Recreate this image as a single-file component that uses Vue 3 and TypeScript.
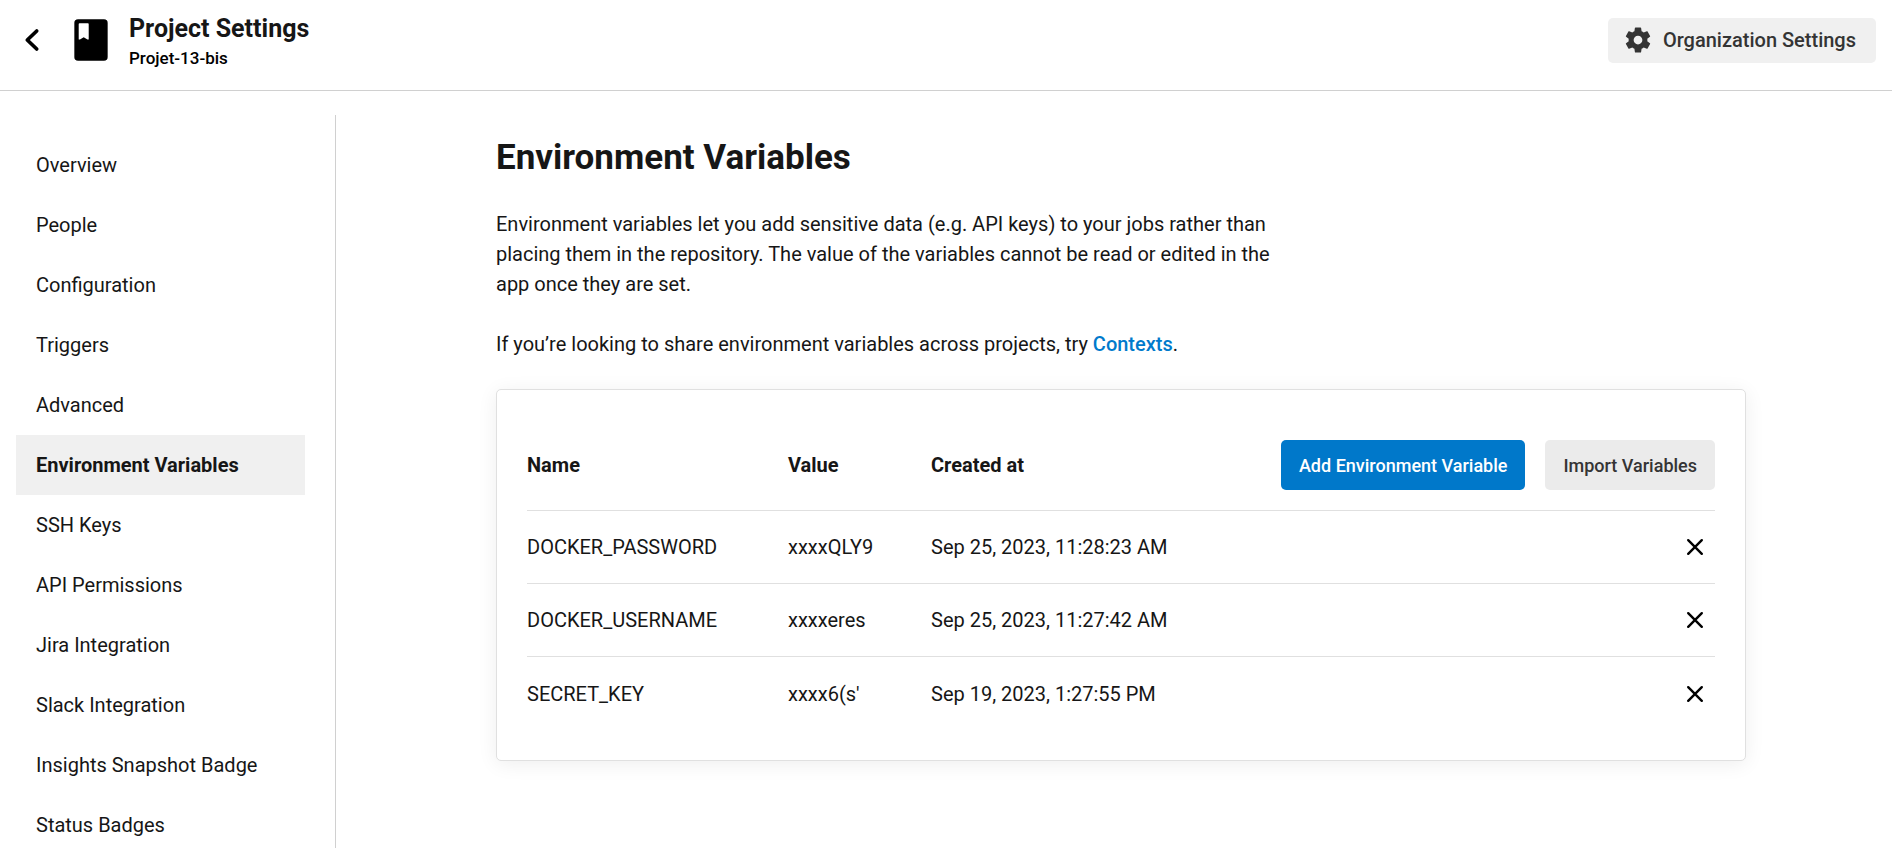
<script setup lang="ts">
interface NavItem {
  label: string
  active?: boolean
}

interface EnvVariable {
  name: string
  value: string
  createdAt: string
}

const navItems: NavItem[] = [
  { label: 'Overview' },
  { label: 'People' },
  { label: 'Configuration' },
  { label: 'Triggers' },
  { label: 'Advanced' },
  { label: 'Environment Variables', active: true },
  { label: 'SSH Keys' },
  { label: 'API Permissions' },
  { label: 'Jira Integration' },
  { label: 'Slack Integration' },
  { label: 'Insights Snapshot Badge' },
  { label: 'Status Badges' },
]

const variables: EnvVariable[] = [
  { name: 'DOCKER_PASSWORD', value: 'xxxxQLY9', createdAt: 'Sep 25, 2023, 11:28:23 AM' },
  { name: 'DOCKER_USERNAME', value: 'xxxxeres', createdAt: 'Sep 25, 2023, 11:27:42 AM' },
  { name: 'SECRET_KEY', value: "xxxx6(s'", createdAt: 'Sep 19, 2023, 1:27:55 PM' },
]
</script>

<template>
  <div class="page">
    <header class="topbar">
      <button class="back" type="button" aria-label="Back">
        <svg width="30" height="30" viewBox="0 0 30 30" fill="none" stroke="#000" stroke-width="3.700" stroke-linecap="round" stroke-linejoin="round">
          <path d="M20.700 6 11.300 15l9.400 9" />
        </svg>
      </button>
      <svg class="book" width="50" height="50" viewBox="0 0 24 24" aria-hidden="true">
        <rect x="4" y="2" width="16" height="20" rx="1.800" fill="#000" />
        <path fill="#fff" d="M6.700 3.900h3.700c.3 0 .5.200.5.500v7.400h-.6L8.500 10.700 6.700 11.800h-.6V4.400c0-.3.200-.5.600-.5z" />
      </svg>
      <div class="heading">
        <div class="title">Project Settings</div>
        <div class="subtitle">Projet-13-bis</div>
      </div>
      <button class="org" type="button">
        <svg width="30" height="30" viewBox="0 0 24 24" fill="#343434" aria-hidden="true">
          <path d="M19.430 12.980c.04-.32.07-.64.07-.98s-.03-.66-.07-.98l2.110-1.650c.19-.15.24-.42.12-.64l-2-3.460c-.12-.22-.39-.3-.61-.22l-2.490 1c-.52-.4-1.080-.73-1.690-.98l-.38-2.650C14.460 2.180 14.250 2 14 2h-4c-.25 0-.46.18-.49.42l-.38 2.650c-.61.25-1.170.59-1.690.98l-2.490-1c-.23-.09-.49 0-.61.22l-2 3.460c-.13.22-.07.49.12.64l2.110 1.650c-.04.32-.07.65-.07.98s.03.66.07.98l-2.110 1.650c-.19.15-.24.42-.12.64l2 3.460c.12.22.39.3.61.22l2.490-1c.52.4 1.080.73 1.690.98l.38 2.650c.03.24.24.42.49.42h4c.25 0 .46-.18.49-.42l.38-2.650c.61-.25 1.170-.59 1.690-.98l2.490 1c.23.09.49 0 .61-.22l2-3.460c.12-.22.07-.49-.12-.64l-2.110-1.650zM12 15.500c-1.930 0-3.500-1.570-3.500-3.500s1.570-3.500 3.500-3.500 3.500 1.570 3.500 3.500-1.570 3.500-3.500 3.500z" />
        </svg>
        Organization Settings
      </button>
    </header>

    <div class="body">
      <nav class="sidebar" aria-label="Project settings">
        <a
          v-for="item in navItems"
          :key="item.label"
          href="#"
          class="nav-item"
          :class="{ active: item.active }"
          :aria-current="item.active ? 'page' : undefined"
        >{{ item.label }}</a>
      </nav>

      <main class="content">
        <div class="column">
          <h1>Environment Variables</h1>
          <p>
            Environment variables let you add sensitive data (e.g. API keys) to your jobs rather than
            placing them in the repository. The value of the variables cannot be read or edited in the
            app once they are set.
          </p>
          <p>
            If you’re looking to share environment variables across projects, try
            <a href="#" class="link">Contexts</a>.
          </p>

          <section class="card">
            <table>
              <thead>
                <tr>
                  <th class="name" scope="col">Name</th>
                  <th class="value" scope="col">Value</th>
                  <th scope="col">Created at</th>
                  <td class="actions">
                    <div class="buttons">
                      <button class="btn primary" type="button">Add Environment Variable</button>
                      <button class="btn" type="button">Import Variables</button>
                    </div>
                  </td>
                </tr>
              </thead>
              <tbody>
                <tr v-for="variable in variables" :key="variable.name">
                  <td>{{ variable.name }}</td>
                  <td>{{ variable.value }}</td>
                  <td>{{ variable.createdAt }}</td>
                  <td class="actions">
                    <button class="remove" type="button" :aria-label="`Delete ${variable.name}`">
                      <svg width="20" height="20" viewBox="0 0 20 20" fill="none" stroke="#000" stroke-width="2.400" stroke-linecap="round">
                        <path d="M3.200 3.200l13.600 13.600M16.800 3.200L3.200 16.800" />
                      </svg>
                    </button>
                  </td>
                </tr>
              </tbody>
            </table>
          </section>
        </div>
      </main>
    </div>
  </div>
</template>

<style>
body {
  background: #fff;
  overflow: hidden;
}
</style>

<style scoped>
.page {
  display: flex;
  flex-direction: column;
  height: 100vh;
  font-family: Roboto, "Liberation Sans", sans-serif;
  font-size: 20px;
  line-height: 30px;
  color: #161616;
}

button {
  border: 0;
  background: none;
  font-family: inherit;
  cursor: pointer;
}

svg {
  display: block;
}

.topbar {
  display: flex;
  align-items: center;
  flex: none;
  height: 80px;
  padding: 0 16px 10px;
  border-bottom: 1px solid #d0d0d0;
}

.back {
  padding: 0;
}

.book {
  margin-left: 20px;
}

.heading {
  margin-left: 13px;
  padding-top: 6px;
}

.title {
  font-size: 25px;
  font-weight: 700;
}

.subtitle {
  font-size: 17px;
  line-height: 28px;
  font-weight: 500;
  color: #000;
}

.org {
  display: flex;
  align-items: center;
  gap: 10px;
  height: 45px;
  margin-left: auto;
  padding: 0 20px 0 15px;
  border-radius: 5px;
  background: #f0f0f0;
  color: #343434;
  font-size: 20px;
  font-weight: 500;
}

.body {
  display: flex;
  flex: 1;
  min-height: 0;
}

.sidebar {
  flex: none;
  width: 289px;
  margin-top: 24px;
  padding: 20px 30px 0 16px;
  border-right: 1px solid #d0d0d0;
  overflow: hidden;
}

.nav-item {
  display: block;
  padding: 15px 20px;
  color: inherit;
  text-decoration: none;
}

.nav-item.active {
  background: #f0f0f0;
  font-weight: 700;
}

.content {
  flex: 1;
  min-width: 0;
  padding: 44px 0 40px 14px;
}

.column {
  max-width: 1250px;
  margin: 0 auto;
}

h1 {
  margin: 0 0 28px;
  font-size: 35px;
  line-height: 46px;
  font-weight: 700;
}

p {
  max-width: 780px;
  margin: 0 0 30px;
}

.link {
  color: #007acc;
  font-weight: 500;
  text-decoration: none;
}

.card {
  padding: 50px 30px 30px;
  border: 1px solid #e0e0e0;
  border-radius: 5px;
  background: #fff;
  box-shadow: 0 3px 20px rgba(0, 0, 0, 0.07);
}

table {
  width: 100%;
  border-collapse: separate;
  border-spacing: 0;
}

th,
td {
  padding: 0;
  text-align: left;
}

th {
  padding-bottom: 20px;
  font-weight: 700;
}

.name {
  width: 261px;
}

.value {
  width: 143px;
}

thead .actions {
  padding-bottom: 20px;
}

thead th,
thead td,
tbody tr:not(:last-child) td {
  border-bottom: 1px solid #e0e0e0;
}

tbody td {
  height: 72px;
}

tbody tr:last-child td {
  height: 73px;
}

.buttons {
  display: flex;
  justify-content: flex-end;
  gap: 20px;
}

.btn {
  height: 50px;
  padding: 0 18px;
  border-radius: 5px;
  background: #ebebeb;
  color: #343434;
  font-size: 18px;
  font-weight: 500;
}

.btn.primary {
  background: #0078ca;
  color: #fff;
}

.remove {
  display: block;
  margin-left: auto;
  padding: 10px;
}
</style>
